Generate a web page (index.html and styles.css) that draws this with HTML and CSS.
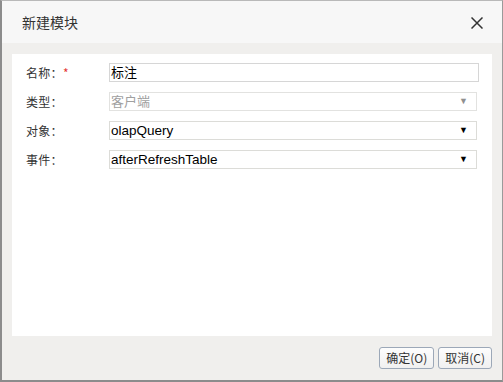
FILE: index.html
```html
<!DOCTYPE html>
<html lang="zh-CN">
<head>
<meta charset="UTF-8">
<meta name="viewport" content="width=device-width, initial-scale=1.0">
<link rel="stylesheet" href="styles.css">
<title>新建模块</title>
</head>
<body>
  <div class="dialog">
    <div class="dialog-header">
      <span class="dialog-title">新建模块</span>
      <svg class="close" width="12" height="12" viewBox="0 0 12 12">
        <path d="M0.5 0.5 L11.5 11.5 M11.5 0.5 L0.5 11.5" stroke="#333" stroke-width="1.5" fill="none"/>
      </svg>
    </div>
    <div class="dialog-body">
      <div class="panel">
        <div class="row">
          <label class="label">名称：<span class="req">*</span></label>
          <div class="field text">标注</div>
        </div>
        <div class="row">
          <label class="label">类型：</label>
          <div class="field select disabled">客户端<span class="arrow">▼</span></div>
        </div>
        <div class="row">
          <label class="label">对象：</label>
          <div class="field select">olapQuery<span class="arrow">▼</span></div>
        </div>
        <div class="row">
          <label class="label">事件：</label>
          <div class="field select">afterRefreshTable<span class="arrow">▼</span></div>
        </div>
      </div>
      <div class="footer">
        <button class="btn">确定(O)</button>
        <button class="btn">取消(C)</button>
      </div>
    </div>
  </div>
</body>
</html>
```

FILE: styles.css
```css
html, body {
  margin: 0;
  padding: 0;
}
body {
  width: 503px;
  height: 382px;
  font-family: "Liberation Sans", "Noto Sans CJK SC", sans-serif;
  background: #f0efed;
}
.dialog {
  box-sizing: border-box;
  width: 503px;
  height: 382px;
  border-top: 1px solid #b9b9b9;
  border-left: 2px solid #8c8c8c;
  border-right: 1px solid #9a9a9a;
  border-bottom: 2px solid #8c8c8c;
  display: flex;
  flex-direction: column;
}
.dialog-header {
  height: 42px;
  background: #f7f7f7;
  display: flex;
  align-items: center;
  justify-content: space-between;
  padding: 0 19px 0 20px;
}
.dialog-title {
  font-family: "Noto Sans CJK SC", sans-serif;
  font-size: 14px;
  color: #333;
}
.close {
  margin-top: 2px;
}
.dialog-body {
  flex: 1;
  padding: 11px 10px 0 10px;
}
.panel {
  background: #fff;
  height: 282px;
  box-sizing: border-box;
  padding: 9px 13px 0 14px;
  display: flex;
  flex-direction: column;
  gap: 10px;
}
.row {
  display: flex;
  align-items: center;
  height: 19px;
}
.label {
  width: 83px;
  font-family: "Noto Sans CJK SC", sans-serif;
  font-size: 12px;
  color: #333;
  letter-spacing: 0.3px;
}
.req {
  color: #e53935;
}
.field {
  flex: 1;
  box-sizing: border-box;
  height: 19px;
  border: 1px solid #d6d6d6;
  font-size: 13.5px;
  line-height: 17px;
  color: #000;
  padding-left: 1px;
  display: flex;
  align-items: center;
  font-family: "Liberation Sans", "Noto Sans CJK SC", sans-serif;
}
.field.text {
  font-size: 13px;
}
.field.select {
  margin-right: 2px;
  justify-content: space-between;
  padding-right: 8px;
  border-color: #dcdcd8;
}
.field.disabled {
  font-size: 13px;
  color: #a0a0a0;
  border-color: #e2e2e0;
}
.arrow {
  font-size: 9px;
  color: #000;
}
.disabled .arrow {
  color: #909090;
}
.footer {
  display: flex;
  justify-content: flex-end;
  gap: 4px;
  padding-top: 11px;
}
.btn {
  height: 22px;
  padding: 0 6px;
  border: 1px solid #9ca8b8;
  border-radius: 3px;
  background: linear-gradient(#fdfdfd, #f0f0f0);
  font-family: "Noto Sans CJK SC", sans-serif;
  font-size: 12px;
  color: #333;
  line-height: 18px;
}
```
